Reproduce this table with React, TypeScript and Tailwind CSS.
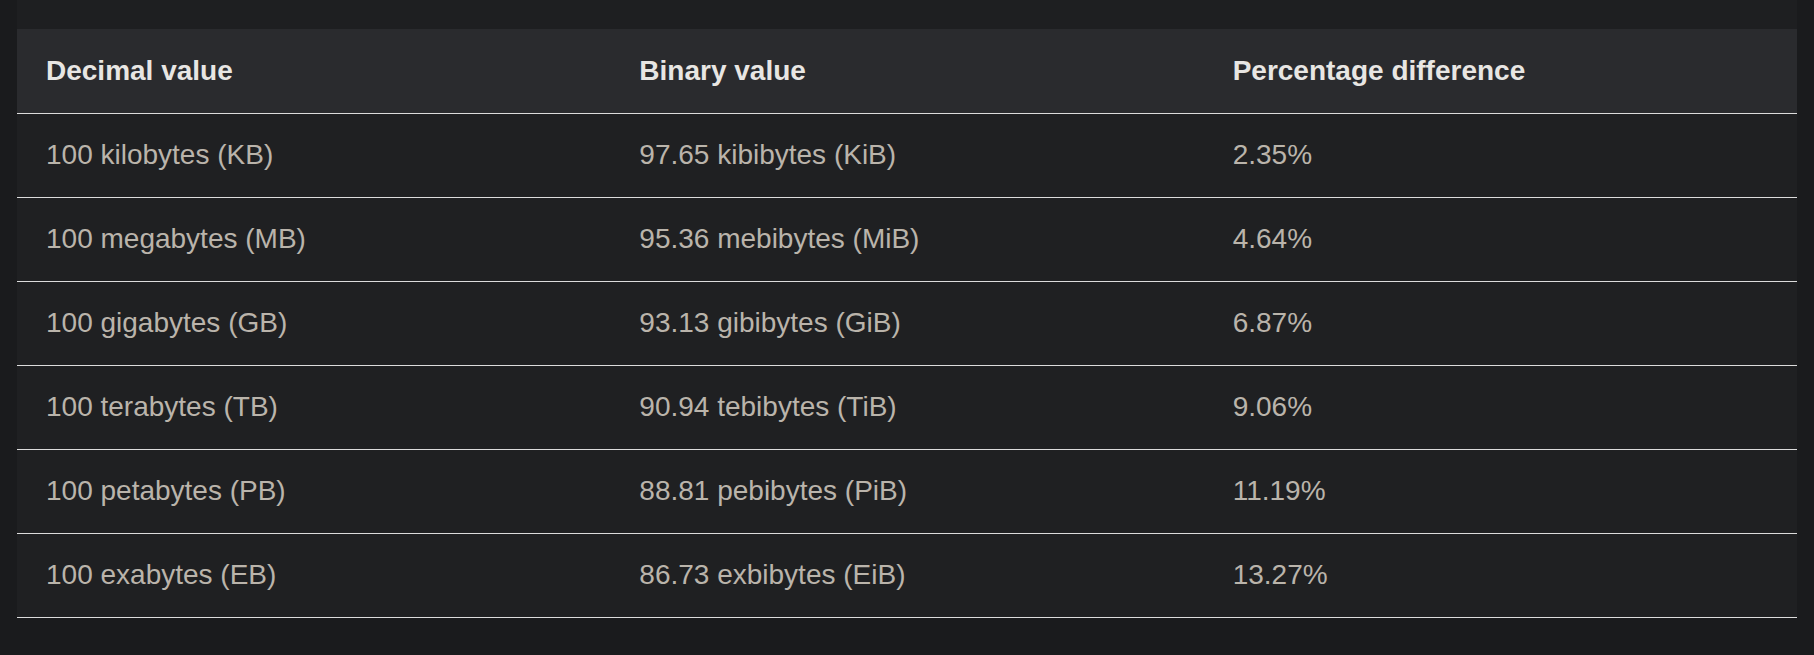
const rows = [
  ["100 kilobytes (KB)", "97.65 kibibytes (KiB)", "2.35%"],
  ["100 megabytes (MB)", "95.36 mebibytes (MiB)", "4.64%"],
  ["100 gigabytes (GB)", "93.13 gibibytes (GiB)", "6.87%"],
  ["100 terabytes (TB)", "90.94 tebibytes (TiB)", "9.06%"],
  ["100 petabytes (PB)", "88.81 pebibytes (PiB)", "11.19%"],
  ["100 exabytes (EB)", "86.73 exbibytes (EiB)", "13.27%"],
];

export default function App() {
  return (
    <div className="h-[655px] bg-[#1a1b1d] px-[17px] font-['Liberation_Sans',Arial,sans-serif] text-[28px]">
      <div className="h-[29px] bg-[#1e1f21]" />
      <table className="w-full table-fixed border-collapse">
        <thead>
          <tr className="h-[84px] border-b border-[#dcdcdc] bg-[#2a2b2e]">
            <th className="px-[29px] text-left font-bold text-[#e8e6e3]">Decimal value</th>
            <th className="px-[29px] text-left font-bold text-[#e8e6e3]">Binary value</th>
            <th className="px-[29px] text-left font-bold text-[#e8e6e3]">Percentage difference</th>
          </tr>
        </thead>
        <tbody>
          {rows.map((r) => (
            <tr key={r[0]} className="h-[84px] border-b border-[#dcdcdc] bg-[#1f2022]">
              {r.map((c) => (
                <td key={c} className="px-[29px] text-[#bab4ab]">
                  {c}
                </td>
              ))}
            </tr>
          ))}
        </tbody>
      </table>
    </div>
  );
}
